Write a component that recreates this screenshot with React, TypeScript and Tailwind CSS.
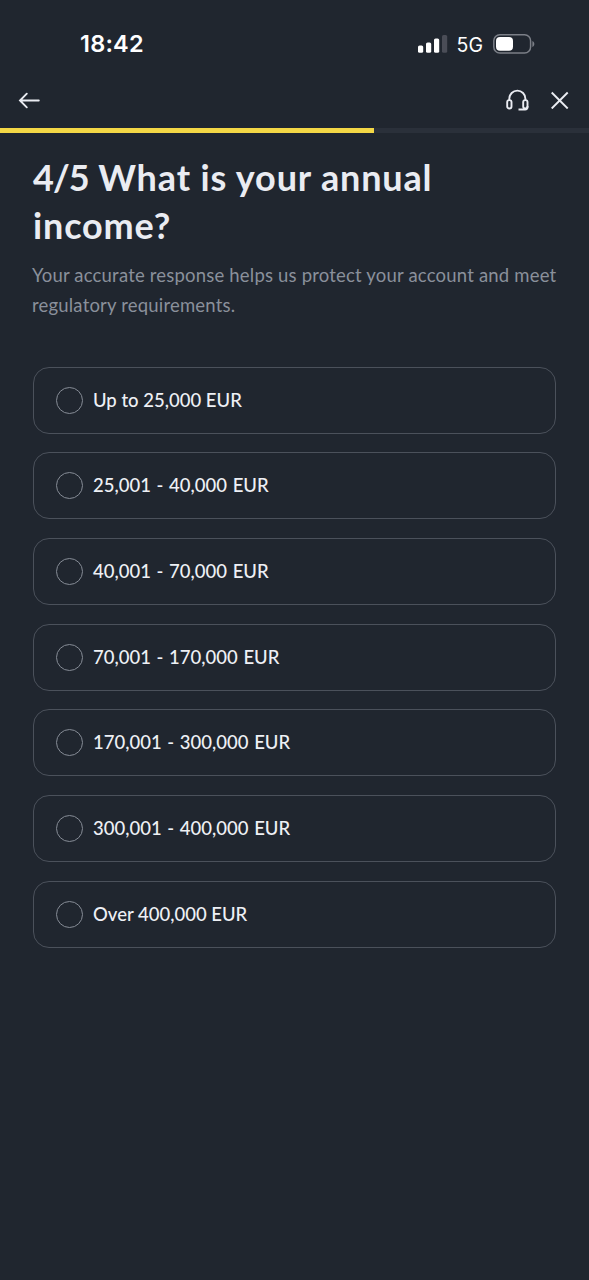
import { useState } from 'react';

const options = [
  'Up to 25,000 EUR',
  '25,001 - 40,000 EUR',
  '40,001 - 70,000 EUR',
  '70,001 - 170,000 EUR',
  '170,001 - 300,000 EUR',
  '300,001 - 400,000 EUR',
  'Over 400,000 EUR',
];

const StatusBar = () => (
  <div className="flex h-[72px] items-center justify-between pt-4 pr-[54px] pl-20 font-[Inter,sans-serif] text-white">
    <span className="text-[23.5px] leading-7 font-semibold tracking-[0.2px]">18:42</span>
    <div className="flex items-center">
      <svg width="30" height="18" viewBox="0 0 30 18" fill="currentColor">
        <rect x="0" y="10.5" width="5.2" height="7.3" rx="1.6" />
        <rect x="8" y="7.5" width="5.2" height="10.3" rx="1.6" />
        <rect x="16" y="3.5" width="5.2" height="14.3" rx="1.6" />
        <rect x="24" y="0" width="5.2" height="17.8" rx="1.6" fill="#4a4d57" />
      </svg>
      <span className="mt-[2px] ml-[9px] text-[19.5px] leading-6 font-normal">5G</span>
      <svg className="ml-[10px]" width="42" height="20" viewBox="0 0 42 20" fill="none">
        <rect x="0.8" y="0.8" width="36.8" height="18.2" rx="6" stroke="#7b7f87" strokeWidth="1.5" />
        <rect x="3" y="3.1" width="17" height="13.6" rx="4" fill="white" />
        <path d="M39.4 7v6c1.2-.6 1.9-1.7 1.9-3s-.7-2.4-1.9-3z" fill="#7b7f87" />
      </svg>
    </div>
  </div>
);

const Header = () => (
  <header className="flex h-14 items-center justify-between pr-[20px] pl-[18px] text-[#eaecf2]">
    <button type="button" aria-label="Back">
      <svg width="22" height="18" viewBox="0 0 22 18" fill="none" stroke="currentColor" strokeWidth="1.9" strokeLinecap="round">
        <path d="M8.8 2.7L2 9.5l6.8 6.8M2 9.5h18.8" />
      </svg>
    </button>
    <div className="flex items-center gap-[21px]">
      <button type="button" aria-label="Support">
        <svg width="24" height="22" viewBox="0 0 24 22" fill="none" stroke="currentColor" strokeWidth="1.9">
          <rect x="1.2" y="11.1" width="4.3" height="8.4" rx="2" />
          <rect x="17.2" y="11.1" width="4.3" height="8.4" rx="2" />
          <path d="M3.3 11.1V9.7a8.05 8.05 0 0 1 16.1 0v1.4M21.5 17.1v1a2.4 2.4 0 0 1-2.4 2.4H12.5" />
        </svg>
      </button>
      <button type="button" aria-label="Close">
        <svg width="18" height="18" viewBox="0 0 18 18" fill="none" stroke="currentColor" strokeWidth="1.9">
          <path d="M0.7 1.5l16 16M16.700 1.5l-16 16" />
        </svg>
      </button>
    </div>
  </header>
);

const App = () => {
  const [selected, setSelected] = useState('');

  return (
    <div className="min-h-screen w-full bg-[#20262f] font-[Lato,sans-serif]">
      <StatusBar />
      <Header />
      <div className="h-[5px] bg-[#2a303a]">
        <div className="h-full w-[374px] bg-[#f3d746]" />
      </div>

      <main className="pt-5 pr-[33px] pl-[33px]">
        <h1 className="text-[36px] leading-12 font-bold tracking-[0.85px] whitespace-nowrap text-[#eaecf2]">
          <span className="tracking-[-0.9px]">4/5</span> What is your annual
          <br />
          income?
        </h1>
        <p className="-ml-px mt-[12px] text-[18.5px] leading-[29.5px] tracking-[0.19px] whitespace-nowrap text-[#8a909b]">
          Your accurate response helps us protect your account and meet
          <br />
          regulatory requirements.
        </p>

        <div className="mt-[46.7px] flex flex-col gap-[18.7px]">
          {options.map((option) => (
            <button
              key={option}
              type="button"
              onClick={() => setSelected(option)}
              className="flex h-[67px] w-full items-center rounded-2xl border border-[#4b515b] pl-[22px] text-left"
            >
              <span className="flex size-[27px] items-center justify-center rounded-full border border-[#868c96]">
                {selected === option && <span className="size-3 rounded-full bg-[#f3d746]" />}
              </span>
              <span
                className={`mb-px ml-[10px] text-[18.5px] leading-6 font-medium text-[#eef0f5] ${
                  option.includes('-') ? '[word-spacing:1px]' : ''
                }`}
              >
                {option}
              </span>
            </button>
          ))}
        </div>
      </main>
    </div>
  );
};

export default App;
